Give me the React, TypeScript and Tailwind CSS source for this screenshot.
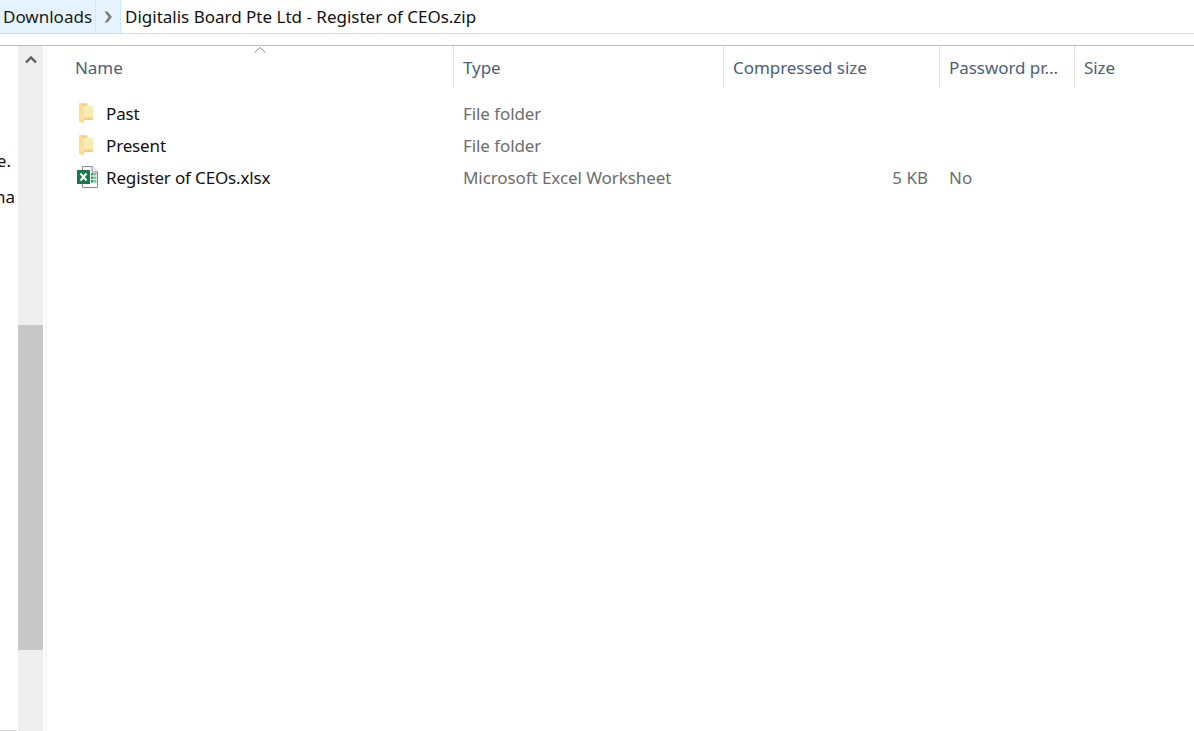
const FONT = "font-['Noto_Sans','Open_Sans',sans-serif]";

const COLUMNS = [
  { label: 'Name', width: 'w-[407px]' },
  { label: 'Type', width: 'w-[270px]' },
  { label: 'Compressed size', width: 'w-[216px]' },
  { label: 'Password pr...', width: 'w-[135px]' },
  { label: 'Size', width: 'w-[120px]' },
];

const ROWS = [
  { name: 'Past', type: 'File folder', size: '', password: '', icon: 'folder' },
  { name: 'Present', type: 'File folder', size: '', password: '', icon: 'folder' },
  { name: 'Register of CEOs.xlsx', type: 'Microsoft Excel Worksheet', size: '5 KB', password: 'No', icon: 'excel' },
];

function FolderIcon() {
  return (
    <svg width="15" height="21" viewBox="0 0 15 21">
      <path d="M0 0.5 H8 L9 3 H14 V17 H5 V20.5 L0 18.5 Z" fill="#f7d978" />
      <path d="M5 3 H14 V16 H5 Z" fill="#fcecb4" />
      <path d="M5 14.5 H14 V17 H5 Z" fill="#f3d27a" />
      <path d="M0 0.5 L5 2.5 V20.5 L0 18.5 Z" fill="#f9e09a" />
      <path d="M0 0.5 H8 L8.5 2.5 H5 Z" fill="#f0cf76" />
    </svg>
  );
}

function ExcelIcon() {
  return (
    <svg width="22" height="24" viewBox="0 0 22 24">
      <path d="M5.5 1.5 H15 L20.5 7 V22.5 H5.5 Z" fill="#fff" stroke="#8a8a8a" />
      <path d="M15 1.5 V7 H20.5" fill="#f2f2f2" stroke="#8a8a8a" />
      <rect x="14" y="8" width="2.5" height="2.5" fill="#2f9a62" />
      <rect x="17" y="8" width="2.5" height="2.5" fill="#7cbf9c" />
      <rect x="14" y="11.5" width="2.5" height="2.5" fill="#2f9a62" />
      <rect x="17" y="11.5" width="2.5" height="2.5" fill="#7cbf9c" />
      <rect x="14" y="15" width="2.5" height="2.5" fill="#2f9a62" />
      <rect x="17" y="15" width="2.5" height="2.5" fill="#7cbf9c" />
      <rect x="0" y="5" width="13" height="14" fill="#18794a" />
      <path d="M3.5 8.5 L9.5 15.5 M9.5 8.5 L3.5 15.5" stroke="#fff" strokeWidth="2" />
    </svg>
  );
}

export default function App() {
  return (
    <div className={`${FONT} w-[1194px] h-[731px] bg-white overflow-hidden flex flex-col text-[17px]`}>
      {/* Breadcrumb */}
      <div className="h-[34px] shrink-0 flex border-b border-[#d9d9d9]">
        <div className="h-[33px] w-[96px] bg-[#e5f3ff] border-r border-[#cce8ff] flex items-center pl-[3px] text-[#1a1a1a] whitespace-nowrap">
          Downloads
        </div>
        <div className="h-[33px] w-[25px] bg-[#e5f3ff] border-r border-[#cce8ff] flex items-center justify-center">
          <svg width="10" height="12" viewBox="0 0 10 12">
            <path d="M1.5 0.5 H4.5 L9 6 L4.5 11.5 H1.5 L5.5 6 Z" fill="#7f7f7f" />
          </svg>
        </div>
        <div className="h-[33px] pl-[4px] flex items-center text-[#111] whitespace-nowrap">
          Digitalis Board Pte Ltd - Register of CEOs.zip
        </div>
      </div>
      <div className="h-[12px] shrink-0 border-b border-[#bfbfbf]" />

      <div className="flex-1 flex min-h-0">
        {/* Clipped text from the panel on the left */}
        <div className="w-[18px] shrink-0 relative overflow-hidden flex flex-col text-[#111]">
          <div className="h-[97px] shrink-0" />
          <div className="h-[36px] shrink-0 flex items-center justify-end whitespace-nowrap pr-[7px]">e.</div>
          <div className="h-[36px] shrink-0 flex items-center justify-end whitespace-nowrap pr-[3px]">na</div>
          <div className="absolute bottom-0 left-0 w-[17px] h-[1px] bg-[#d0d0d0]" />
        </div>

        {/* Scrollbar */}
        <div className="w-[25px] shrink-0 bg-[#eeeeee] flex flex-col">
          <div className="h-[279px] shrink-0 flex justify-center pt-[7px]">
            <svg width="14" height="14" viewBox="0 0 14 14">
              <path d="M2 9.5 L7 4.5 L12 9.5" fill="none" stroke="#5f5f5f" strokeWidth="2.4" />
            </svg>
          </div>
          <div className="h-[325px] shrink-0 bg-[#c8c8c8]" />
        </div>

        <div className="w-[2px] shrink-0" />
        <div className="w-[2px] shrink-0 bg-[#f6f6f6]" />

        {/* File list */}
        <div className="flex-1 min-w-0 relative">
          <svg className="absolute left-[206px] top-0" width="14" height="8" viewBox="0 0 14 8">
            <path d="M1.5 6.5 L7 1.5 L12.5 6.5" fill="none" stroke="#8c8c8c" />
          </svg>
          <div className="flex h-[42px] tracking-[-0.05px]">
            {COLUMNS.map((c) => (
              <div
                key={c.label}
                className={`${c.width} shrink-0 h-[42px] border-r border-[#e5e5e5] last:border-r-0 flex items-center pt-[1px] text-[#4c607a] whitespace-nowrap ${
                  c.label === 'Name' ? 'pl-[28px]' : 'pl-[9px]'
                }`}
              >
                {c.label}
              </div>
            ))}
          </div>
          <div className="pt-[10px]">
            {ROWS.map((r) => (
              <div key={r.name} className="flex h-[32px] items-center">
                <div className="w-[407px] shrink-0 flex items-center pl-[27px]">
                  <div className="w-[24px] shrink-0 flex justify-start">
                    {r.icon === 'folder' ? (
                      <div className="pl-[5px] -mt-[2px]">
                        <FolderIcon />
                      </div>
                    ) : (
                      <div className="-mt-[3px] pl-[3px]">
                        <ExcelIcon />
                      </div>
                    )}
                  </div>
                  <span className="pl-[8px] text-[#111] whitespace-nowrap tracking-[-0.15px]">{r.name}</span>
                </div>
                <div className="w-[270px] shrink-0 pl-[9px] text-[#6d6d6d] whitespace-nowrap tracking-[-0.08px]">{r.type}</div>
                <div className="w-[216px] shrink-0 pr-[12px] text-right text-[#6d6d6d]">{r.size}</div>
                <div className="w-[135px] shrink-0 pl-[9px] text-[#6d6d6d]">{r.password}</div>
              </div>
            ))}
          </div>
        </div>
      </div>
    </div>
  );
}
